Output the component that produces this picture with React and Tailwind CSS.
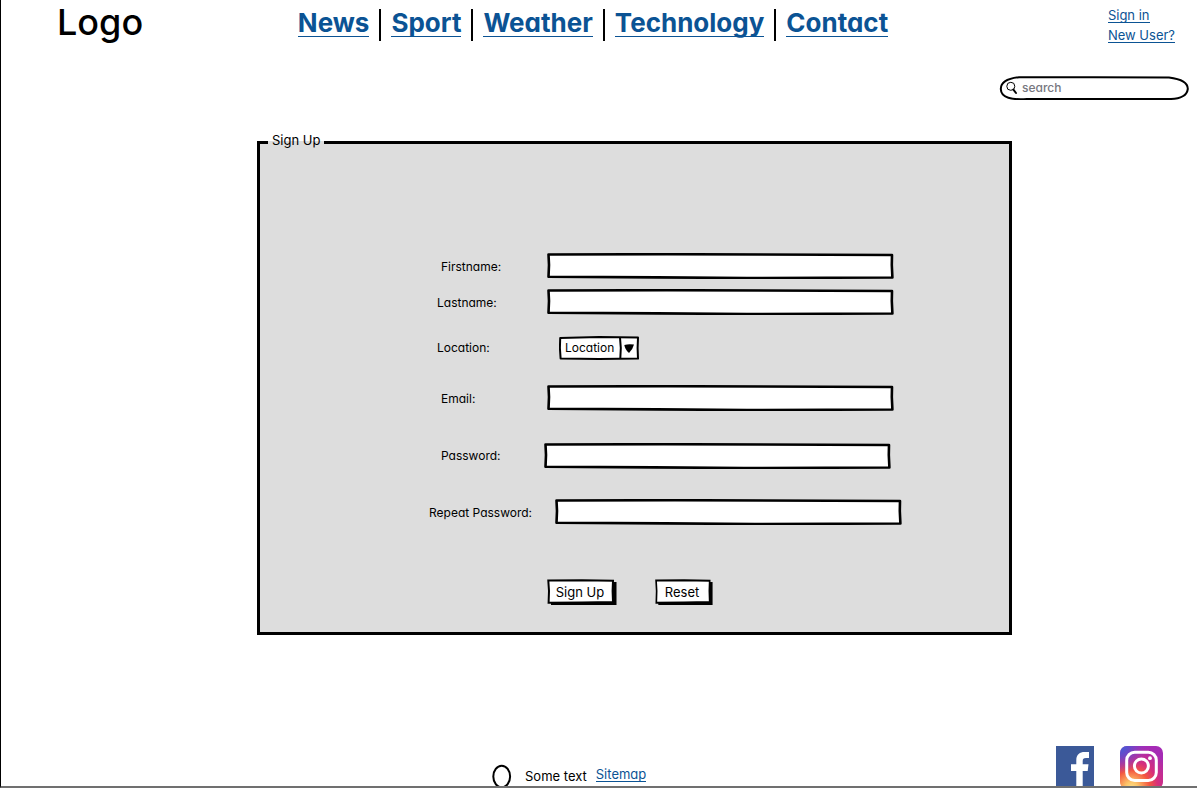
import React from 'react';

const links = ['News', 'Sport', 'Weather', 'Technology', 'Contact'];

const fields = [
  { id: 'firstname', label: 'Firstname:', type: 'text', row: 'pl-[181px]', col: 'w-[106px] pt-0.5' },
  { id: 'lastname', label: 'Lastname:', type: 'text', row: 'mt-2.5 pl-[177px]', col: 'w-[110px] pt-0.5' },
  { id: 'location', label: 'Location:', type: 'select', row: 'mt-[21px] pl-[177px]', col: 'w-[122px]' },
  { id: 'email', label: 'Email:', type: 'email', row: 'mt-[25px] pl-[181px]', col: 'w-[106px] pt-0.5' },
  { id: 'password', label: 'Password:', type: 'password', row: 'mt-8 pl-[181px]', col: 'w-[103px]' },
  { id: 'repeat', label: 'Repeat Password:', type: 'password', row: 'mt-[30px] pl-[169px]', col: 'w-[126px] pt-0.5' },
];

function Frame({ viewBox, children }) {
  return (
    <svg
      aria-hidden="true"
      viewBox={viewBox}
      preserveAspectRatio="none"
      className="pointer-events-none absolute inset-0 h-full w-full"
    >
      {children}
    </svg>
  );
}

function TextField({ id, type }) {
  return (
    <div className="relative h-6.5 w-[347px]">
      <Frame viewBox="0 0 347 26">
        <path d="M1.5 1.5 L120 1.2 L345 2 L344.8 12 L345.4 24.5 L200 25 L110 24.4 L1.5 23.8 L2 12 Z" fill="#fff" stroke="#000" strokeWidth="2.6" strokeLinejoin="round" />
      </Frame>
      <input id={id} name={id} type={type} className="relative h-full w-full bg-transparent px-2 outline-none" />
    </div>
  );
}

function LocationSelect({ id }) {
  return (
    <div className="relative h-6 w-20">
      <Frame viewBox="0 0 80 24">
        <path d="M1.2 2 L40 1 L79 1.6 L78.6 12 L79 22.6 L40 23 L1.6 22.4 L0.9 12 Z" fill="#fff" stroke="#000" strokeWidth="2" strokeLinejoin="round" />
        <path d="M61 1.5 L61.8 12 L61.3 22.5" fill="none" stroke="#000" strokeWidth="2" />
        <path d="M65.3 9 Q70 7.5 75 8.6 Q73.8 13.5 70 17 Q66 13.5 65.3 9 Z" />
      </Frame>
      <select id={id} name={id} className="relative h-full w-full appearance-none bg-transparent pl-1.5 text-[12px] outline-none">
        <option>Location</option>
      </select>
    </div>
  );
}

function SketchButton({ type, width, children }) {
  return (
    <button type={type} className={`relative h-6.5 ${width}`}>
      <Frame viewBox="0 0 70 26">
        <path d="M4 4 L69.5 3 L69.5 26 L4 26 Z" />
        <path d="M1.3 1.6 L35 1.2 L66 1.8 L65.6 12 L66 23 L35 23.4 L1.6 23.8 L2 12 Z" fill="#fff" stroke="#000" strokeWidth="2" />
      </Frame>
      <span className="relative block pr-1 leading-6">{children}</span>
    </button>
  );
}

export default function App() {
  return (
    <div className="flex min-h-screen flex-col border-b-2 border-l border-b-[#707070] border-l-black bg-white font-['Inter',sans-serif] text-[13px] text-black [font-feature-settings:'cv11']">
      <header className="grid grid-cols-[1fr_auto_1fr] items-start pr-3">
        <div className="pt-1 pl-14 text-[36px] leading-9 font-medium">Logo</div>
        <nav className="flex pt-[9px] text-[26px] font-bold text-[#0b5394]">
          {links.map((name, i) => (
            <div key={name} className={i ? 'ml-2.5 h-8 border-l-2 border-black pl-2.5' : 'h-8'}>
              <a href="#" className="block border-b border-[#0b5394] leading-[27px]">{name}</a>
            </div>
          ))}
        </nav>
        <div className="flex flex-col items-start gap-[5px] justify-self-end pt-2 pr-2.5 text-[#0b5394]">
          <a href="#" className="border-b border-[#0b5394] leading-3.5">Sign in</a>
          <a href="#" className="border-b border-[#0b5394] leading-3.5">New User?</a>
        </div>
      </header>

      <form role="search" className="relative mt-[33px] mr-2 h-6 w-[190px] self-end">
        <Frame viewBox="0 0 190 24">
          <path d="M20 1.2 C60 0.8 130 1.8 170 1.4 C183 3 189 7 188.8 13 C188 19 182 23 172 23 L28 23 C13 24 2 22 1.8 13 C1.8 6 8 2.5 20 1.2 Z" fill="#fff" stroke="#000" strokeWidth="2" />
          <circle cx="11.8" cy="10.3" r="4" fill="none" stroke="#000" />
          <path d="M14.4 13.6 L17 17" fill="none" stroke="#000" strokeWidth="2" strokeLinecap="round" />
        </Frame>
        <input
          type="search"
          aria-label="search"
          placeholder="search"
          className="relative block h-[23px] w-full bg-transparent pr-3 pl-[23px] text-[12px] font-medium outline-none placeholder:text-[#777780]"
        />
      </form>

      <main className="mt-8 mr-[185px] ml-64">
        <form>
          <fieldset className="border-[3px] border-black bg-[#dddddd] pb-[27px]">
            <legend className="ml-2 px-1 pb-1 leading-4">Sign Up</legend>
            <div className="pt-[101px]">
              {fields.map(({ id, label, type, row, col }) => (
                <div key={id} className={`flex items-center ${row}`}>
                  <label htmlFor={id} className={`shrink-0 text-[12px] leading-4 ${col}`}>{label}</label>
                  {type === 'select' ? <LocationSelect id={id} /> : <TextField id={id} type={type} />}
                </div>
              ))}
            </div>
            <div className="mt-13.5 flex gap-9.5 pl-[287px]">
              <SketchButton type="submit" width="w-17.5">Sign Up</SketchButton>
              <SketchButton type="reset" width="w-14.5">Reset</SketchButton>
            </div>
          </fieldset>
        </form>
      </main>

      <footer className="mt-auto flex h-10 items-start overflow-hidden pr-8.5 pl-[491px]">
        <svg aria-hidden="true" viewBox="0 0 20 24" className="mt-4.5 h-6 w-5 shrink-0">
          <ellipse cx="9.7" cy="12.5" rx="8.4" ry="10.8" fill="none" stroke="#000" strokeWidth="2" />
        </svg>
        <p className="mt-5.5 ml-[13px] leading-4">Some text</p>
        <a href="#" className="mt-[21px] ml-[9px] border-b border-[#0b5394] leading-3.5 text-[#0b5394]">Sitemap</a>
        <div className="ml-auto flex gap-6.5">
          <a href="#" aria-label="Facebook">
            <svg viewBox="0 0 38 40" className="h-10 w-9.5">
              <path d="M0 0H38V40H0Z" fill="#3b5998" />
              <path d="M20.3 40V25H15V18.3H20.3V14C20.3 8.5 24 6 28.5 6H33V12H30C27.5 12 26.7 13 26.7 15.2V18.3H32.5L31.7 25H26.7V40Z" fill="#fff" />
            </svg>
          </a>
          <a href="#" aria-label="Instagram">
            <svg viewBox="0 0 43 43" className="h-10.75 w-10.75">
              <defs>
                <radialGradient id="warm" cx="0.27" cy="0.98" r="1">
                  <stop offset="0" stopColor="#ffe08a" />
                  <stop offset="0.15" stopColor="#fdc468" />
                  <stop offset="0.42" stopColor="#f4563f" />
                  <stop offset="0.62" stopColor="#d62e7c" />
                  <stop offset="1" stopColor="#a52bb5" />
                </radialGradient>
                <radialGradient id="cool" cx="0" cy="0" r="0.65">
                  <stop offset="0" stopColor="#3b62d8" />
                  <stop offset="0.35" stopColor="#5a4fd0" stopOpacity="0.85" />
                  <stop offset="1" stopColor="#8a3ac8" stopOpacity="0" />
                </radialGradient>
              </defs>
              <rect width="43" height="43" rx="7" fill="url(#warm)" />
              <rect width="43" height="43" rx="7" fill="url(#cool)" />
              <rect x="6.7" y="6.3" width="29.6" height="28.2" rx="8" fill="none" stroke="#fff" strokeWidth="3" />
              <circle cx="21.4" cy="20" r="7" fill="none" stroke="#fff" strokeWidth="3" />
              <circle cx="30" cy="12.2" r="1.9" fill="#fff" />
            </svg>
          </a>
        </div>
      </footer>
    </div>
  );
}
